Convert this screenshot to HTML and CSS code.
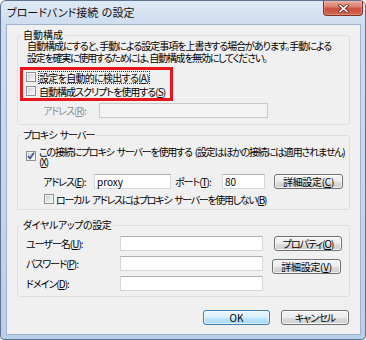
FILE: index.html
```html
<!DOCTYPE html>
<html lang="ja">
<head>
<meta charset="utf-8">
<title>ブロードバンド接続 の設定</title>
<link rel="stylesheet" href="styles.css">
</head>
<body>
<div class="window">
  <div class="titlebar">
    <span class="title">ブロードバンド接続 の設定</span>
    <span class="close">
      <svg width="11" height="9" viewBox="0 0 11 9"><path d="M2 1.5 L9 7.5 M9 1.5 L2 7.5" stroke="#6a2a22" stroke-width="3.2" stroke-linecap="square"/><path d="M2 1.5 L9 7.5 M9 1.5 L2 7.5" stroke="#fff" stroke-width="1.6" stroke-linecap="square"/></svg>
    </span>
  </div>
  <div class="client">
    <fieldset class="group g1">
      <legend class="lg-auto">自動構成</legend>
      <p class="desc">自動構成にすると、手動による設定事項を上書きする場合があります。手動による<br><span class="desc2">設定を確実に使用するためには、自動構成を無効にしてください。</span></p>
      <div class="highlight">
        <label class="check hl-row"><span class="box"></span><span class="focus t-detect">設定を自動的に検出する(<u>A</u>)</span></label>
        <label class="check hl-row"><span class="box"></span><span>自動構成スクリプトを使用する(<u>S</u>)</span></label>
      </div>
      <div class="row auto-addr">
        <span class="lbl lbl-auto disabled">アドレス(<u>R</u>):</span>
        <span class="input input-disabled w-auto"></span>
      </div>
    </fieldset>

    <fieldset class="group g2">
      <legend>プロキシ サーバー</legend>
      <label class="check proxy-use"><span class="box checked"><svg width="8" height="8" viewBox="0 0 8 8"><path d="M1 4 L3 6.5 L7 0.8" fill="none" stroke="#3b4f92" stroke-width="1.6"/></svg></span><span class="wrap">この接続にプロキシ サーバーを使用する (設定はほかの接続には適用されません)<br>(<u>X</u>)</span></label>
      <div class="row proxy-addr">
        <span class="lbl lbl-proxy">アドレス(<u>E</u>):</span>
        <span class="input w-proxy">proxy</span>
        <span class="lbl lbl-port">ポート(<u>T</u>):</span>
        <span class="input w-port">80</span>
        <button class="btn btn-adv kanji">詳細設定(<u>C</u>)</button>
      </div>
      <label class="check local"><span class="box"></span><span class="t-local">ローカル アドレスにはプロキシ サーバーを使用しない(<u>B</u>)</span></label>
    </fieldset>

    <fieldset class="group g3">
      <legend class="lg-dial">ダイヤルアップの設定</legend>
      <div class="row dial first">
        <span class="lbl lbl-dial">ユーザー名(<u>U</u>):</span>
        <span class="input w-dial"></span>
        <button class="btn btn-prop">プロパティ(<u>O</u>)</button>
      </div>
      <div class="row dial">
        <span class="lbl lbl-dial">パスワード(<u>P</u>):</span>
        <span class="input w-dial"></span>
        <button class="btn btn-adv2 kanji">詳細設定(<u>V</u>)</button>
      </div>
      <div class="row dial">
        <span class="lbl lbl-dial">ドメイン(<u>D</u>):</span>
        <span class="input w-dial"></span>
      </div>
    </fieldset>

    <div class="footer">
      <button class="btn btn-ok">OK</button>
      <button class="btn btn-cancel">キャンセル</button>
    </div>
  </div>
</div>
</body>
</html>
```

FILE: styles.css
```css
html, body {
  margin: 0;
  padding: 0;
  background: #ffffff;
}
body {
  font-family: "Noto Sans CJK JP", "Noto Sans", sans-serif;
  font-size: 10px;
  color: #000;
  font-feature-settings: "palt";
  letter-spacing: -1px;
  word-spacing: 2px;
}
u {
  text-underline-offset: 1px;
}

.window {
  box-sizing: border-box;
  width: 366px;
  height: 340px;
  border: 1px solid #5d7391;
  border-radius: 6px 6px 4px 4px;
  background: linear-gradient(to bottom, #dfe9f5 0px, #cddcef 24px, #c2d6ed 60%, #b8cfea 100%);
  padding: 0 4px 4px 5px;
  display: flex;
  flex-direction: column;
}

.titlebar {
  height: 23px;
  display: flex;
  justify-content: space-between;
  align-items: flex-start;
}
.title {
  font-size: 11px;
  line-height: 23px;
  padding-left: 1px;
  color: #111;
  letter-spacing: 0;
  word-spacing: 1px;
}
.close {
  box-sizing: border-box;
  width: 40px;
  height: 15px;
  margin-right: -2px;
  border: 1px solid #7a3328;
  border-top: none;
  border-radius: 0 0 4px 4px;
  background: linear-gradient(to bottom, #e9ab9b 0%, #d98070 40%, #c9503f 55%, #d4664f 100%);
  box-shadow: inset 0 0 0 1px rgba(255, 200, 190, 0.35);
  display: flex;
  align-items: center;
  justify-content: center;
}

.client {
  flex: 1;
  background: #f0f0f0;
  border: 1px solid #9fb3cd;
  display: flex;
  flex-direction: column;
}

.group {
  margin: 5px 10px 0 10px;
  padding: 0 0 6px 3px;
  border: 1px solid #d9e0e5;
  border-radius: 3px;
  min-width: 0;
}
.group legend {
  padding: 0 2px;
  font-size: 10px;
  line-height: 10px;
}
.group legend.lg-auto { letter-spacing: 0; }
.group legend.lg-dial { letter-spacing: -0.4px; }
.g2 { margin-top: 5px; padding-bottom: 4px; }
.g3 { margin-top: 10px; padding-bottom: 5px; }

.desc {
  margin: 0 0 0 6px;
  line-height: 12px;
  white-space: nowrap;
}
.desc2 { letter-spacing: -1.25px; }

.highlight {
  box-sizing: border-box;
  width: 153px;
  margin: 3px 0 0 -1px;
  border: 3px solid #e8161b;
  padding-left: 3px;
}
.check {
  display: flex;
  align-items: center;
  white-space: nowrap;
}
.hl-row {
  height: 14px;
  gap: 3px;
}
.focus {
  outline: 1px dotted #333;
  outline-offset: 0;
  line-height: 11px;
}
.t-detect { letter-spacing: -0.7px; }

.box {
  box-sizing: border-box;
  flex: none;
  width: 10px;
  height: 10px;
  border: 1px solid #8e8f8f;
  background: linear-gradient(135deg, #c4c9cf 0%, #eceef0 70%, #f8f8f8 100%);
  box-shadow: inset 0 0 0 1px #f4f4f4;
  display: flex;
  align-items: center;
  justify-content: center;
}

.row {
  display: flex;
  align-items: center;
  white-space: nowrap;
}
.lbl { flex: none; }
.disabled { color: #8d8d8d; }

.input {
  box-sizing: border-box;
  flex: none;
  height: 15px;
  background: #fff;
  border: 1px solid #d3d7dc;
  border-top-color: #abadb3;
  padding-left: 2px;
  line-height: 13px;
  font-size: 10px;
  letter-spacing: 0;
}
.input-disabled {
  background: #f4f4f4;
  border-color: #c8c8c8;
}

.auto-addr { margin: 2px 0 0 22px; }
.lbl-auto { width: 56px; }
.w-auto { width: 169px; }

.proxy-use {
  align-items: flex-start;
  gap: 3px;
  margin: 7px 0 0 5px;
}
.proxy-use .box { margin-top: 4px; }
.wrap { line-height: 10px; letter-spacing: -1.2px; }

.proxy-addr { margin: 7px 0 0 22px; }
.lbl-proxy { width: 51px; }
.w-proxy { width: 77px; }
.lbl-port { width: 47px; margin-left: 4px; }
.w-port { width: 43px; }

.btn {
  box-sizing: border-box;
  height: 15px;
  padding: 0;
  border: 1px solid #707070;
  border-radius: 3px;
  background: linear-gradient(to bottom, #f4f4f4 0%, #ececec 50%, #dddddd 51%, #cfcfcf 100%);
  box-shadow: inset 0 0 0 1px rgba(255, 255, 255, 0.75);
  font-family: inherit;
  font-size: 10px;
  font-feature-settings: "palt";
  letter-spacing: -1px;
  line-height: 13px;
  color: #000;
  text-align: center;
  flex: none;
}
.btn.kanji { letter-spacing: -0.3px; }
.btn-adv { width: 69px; margin-left: 9px; }

.local {
  height: 12px;
  gap: 2px;
  margin: 4px 0 0 23px;
}
.t-local { letter-spacing: -1.3px; }

.dial { margin-top: 5px; }
.dial.first { margin: 6px 0 0 5px; }
.dial { margin-left: 5px; }
.lbl-dial { width: 94px; }
.w-dial { width: 143px; }
.btn-prop { width: 68px; margin-left: 11px; }
.btn-adv2 { width: 69px; margin: 3px 0 -3px 9px; align-self: flex-start; }

.footer {
  display: flex;
  justify-content: flex-end;
  gap: 11px;
  margin: 13px 11px 0 0;
}
.btn-ok {
  width: 67px;
  letter-spacing: 0;
  border-color: #3c7fb1;
  background: linear-gradient(to bottom, #eaf6fd 0%, #d9f0fc 50%, #bee6fd 51%, #a7d9f5 100%);
  box-shadow: inset 0 0 0 1px rgba(255, 255, 255, 0.6);
}
.btn-cancel { width: 68px; }
```
